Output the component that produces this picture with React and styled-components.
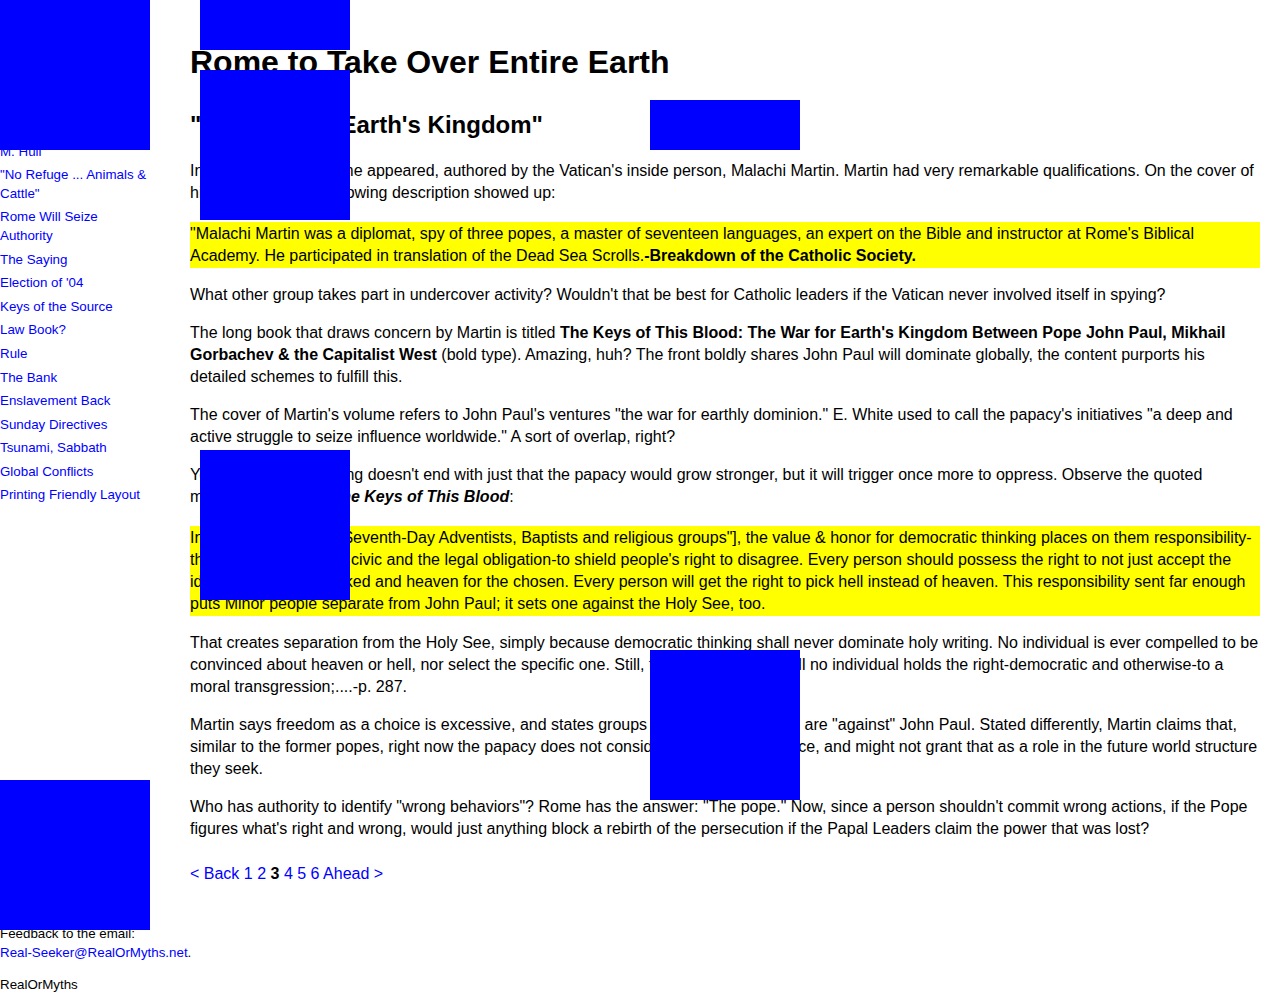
import React from "react";
import styled, { createGlobalStyle } from "styled-components";

const Global = createGlobalStyle`
  html, body { margin: 0; padding: 0; background: #fff; }
  body { font-family: "Liberation Sans", Arial, sans-serif; color: #000; }
`;

const Page = styled.div`
  position: relative;
  min-height: 1008px;
`;

const Columns = styled.div`
  display: flex;
  align-items: flex-start;
  gap: 40px;
  padding-right: 20px;
`;

const Sidebar = styled.nav`
  flex: 0 0 150px;
  width: 150px;
  padding-top: 6px;
  font-size: 13.33px;
  line-height: 18.6px;
`;

const NavLink = styled.a`
  display: block;
  color: #0000ff;
  text-decoration: none;
  margin-bottom: 5px;
`;

const Main = styled.main`
  flex: 1;
  min-width: 0;
  padding-top: 43px;
  font-size: 16px;
  line-height: 22px;
`;

const Title = styled.h1`
  font-size: 32px;
  line-height: 38px;
  font-weight: bold;
  margin: 0 0 30px;
`;

const Subtitle = styled.h2`
  font-size: 24px;
  line-height: 28px;
  font-weight: bold;
  margin: 0 0 21px;
`;

const Para = styled.p`
  margin: 0 0 16px;
`;

const Quote = styled.p`
  margin: 18px 0 16px;
  padding: 1px 0;
  background: #ffff00;
`;

const Pager = styled.div`
  margin-top: 23px;
  font-size: 16px;
  line-height: 22px;
`;

const PageLink = styled.a`
  color: #0000ff;
  text-decoration: none;
`;

const Current = styled.b`
  color: #000;
`;

const Footer = styled.footer`
  margin-top: 39px;
  font-size: 13.33px;
  line-height: 19px;
`;

const FootLine = styled.p`
  margin: 0 0 13px;
`;

const MailLink = styled.a`
  color: #0000ff;
  text-decoration: none;
`;

const Block = styled.div`
  position: absolute;
  background: #0000ff;
  width: 150px;
  height: ${(p) => p.$h || 150}px;
`;

const blocks = [
  { x: 0, y: 0, h: 150 },
  { x: 200, y: 0, h: 50 },
  { x: 200, y: 70, h: 150 },
  { x: 650, y: 100, h: 50 },
  { x: 200, y: 450, h: 150 },
  { x: 650, y: 650, h: 150 },
  { x: 0, y: 780, h: 150 },
];

const navItems = [
  "Home",
  "Contents",
  "Introduction",
  "Papacy Rising",
  "Prophecy Notes",
];

const navItems2 = [
  '"No Refuge ... Animals & Cattle"',
  "Rome Will Seize Authority",
  "The Saying",
  "Election of '04",
  "Keys of the Source",
  "Law Book?",
  "Rule",
  "The Bank",
  "Enslavement Back",
  "Sunday Directives",
  "Tsunami, Sabbath",
  "Global Conflicts",
  "Printing Friendly Layout",
];

export default function App() {
  return (
    <Page>
      <Global />
      <Columns>
        <Sidebar>
          {navItems.map((t) => (
            <NavLink key={t} href="#">{t}</NavLink>
          ))}
          <NavLink href="#">Commentary of<br />M. Hull</NavLink>
          {navItems2.map((t) => (
            <NavLink key={t} href="#">{t}</NavLink>
          ))}
        </Sidebar>
        <Main>
          <Title>Rome to Take Over Entire Earth</Title>
          <Subtitle>"The War for Earth's Kingdom"</Subtitle>
          <Para>
            In 1990, a larger volume appeared, authored by the Vatican's inside person, Malachi Martin. Martin had very remarkable qualifications. On the cover of his large book, the following description showed up:
          </Para>
          <Quote>
            "Malachi Martin was a diplomat, spy of three popes, a master of seventeen languages, an expert on the Bible and instructor at Rome's Biblical Academy. He participated in translation of the Dead Sea Scrolls.<b>-Breakdown of the Catholic Society.</b>
          </Quote>
          <Para>
            What other group takes part in undercover activity? Wouldn't that be best for Catholic leaders if the Vatican never involved itself in spying?
          </Para>
          <Para>
            The long book that draws concern by Martin is titled <b>The Keys of This Blood: The War for Earth's Kingdom Between Pope John Paul, Mikhail Gorbachev &amp; the Capitalist West</b> (bold type). Amazing, huh? The front boldly shares John Paul will dominate globally, the content purports his detailed schemes to fulfill this.
          </Para>
          <Para>
            The cover of Martin's volume refers to John Paul's ventures "the war for earthly dominion." E. White used to call the papacy's initiatives "a deep and active struggle to seize influence worldwide." A sort of overlap, right?
          </Para>
          <Para>
            Yet this author's warning doesn't end with just that the papacy would grow stronger, but it will trigger once more to oppress. Observe the quoted material taken from <b><i>The Keys of This Blood</i></b>:
          </Para>
          <Quote>
            In the case of sects ["Seventh-Day Adventists, Baptists and religious groups"], the value &amp; honor for democratic thinking places on them responsibility-the obligation, at once civic and the legal obligation-to shield people's right to disagree. Every person should possess the right to not just accept the idea of hell for the wicked and heaven for the chosen. Every person will get the right to pick hell instead of heaven. This responsibility sent far enough puts Minor people separate from John Paul; it sets one against the Holy See, too.
          </Quote>
          <Para>
            That creates separation from the Holy See, simply because democratic thinking shall never dominate holy writing. No individual is ever compelled to be convinced about heaven or hell, nor select the specific one. Still, the Pope said that still no individual holds the right-democratic and otherwise-to a moral transgression;....-p. 287.
          </Para>
          <Para>
            Martin says freedom as a choice is excessive, and states groups who hold it to be true are "against" John Paul. Stated differently, Martin claims that, similar to the former popes, right now the papacy does not consider it as a proper choice, and might not grant that as a role in the future world structure they seek.
          </Para>
          <Para>
            Who has authority to identify "wrong behaviors"? Rome has the answer: "The pope." Now, since a person shouldn't commit wrong actions, if the Pope figures what's right and wrong, would just anything block a rebirth of the persecution if the Papal Leaders claim the power that was lost?
          </Para>
          <Pager>
            <PageLink href="#">&lt; Back</PageLink> <PageLink href="#">1</PageLink>{" "}
            <PageLink href="#">2</PageLink> <Current>3</Current>{" "}
            <PageLink href="#">4</PageLink> <PageLink href="#">5</PageLink>{" "}
            <PageLink href="#">6</PageLink> <PageLink href="#">Ahead &gt;</PageLink>
          </Pager>
        </Main>
      </Columns>
      <Footer>
        <FootLine>
          Feedback to the email:
          <br />
          <MailLink href="#">Real-Seeker@RealOrMyths.net</MailLink>.
        </FootLine>
        <FootLine>RealOrMyths</FootLine>
      </Footer>
      {blocks.map((b, i) => (
        <Block key={i} $h={b.h} style={{ left: b.x, top: b.y }} />
      ))}
    </Page>
  );
}
